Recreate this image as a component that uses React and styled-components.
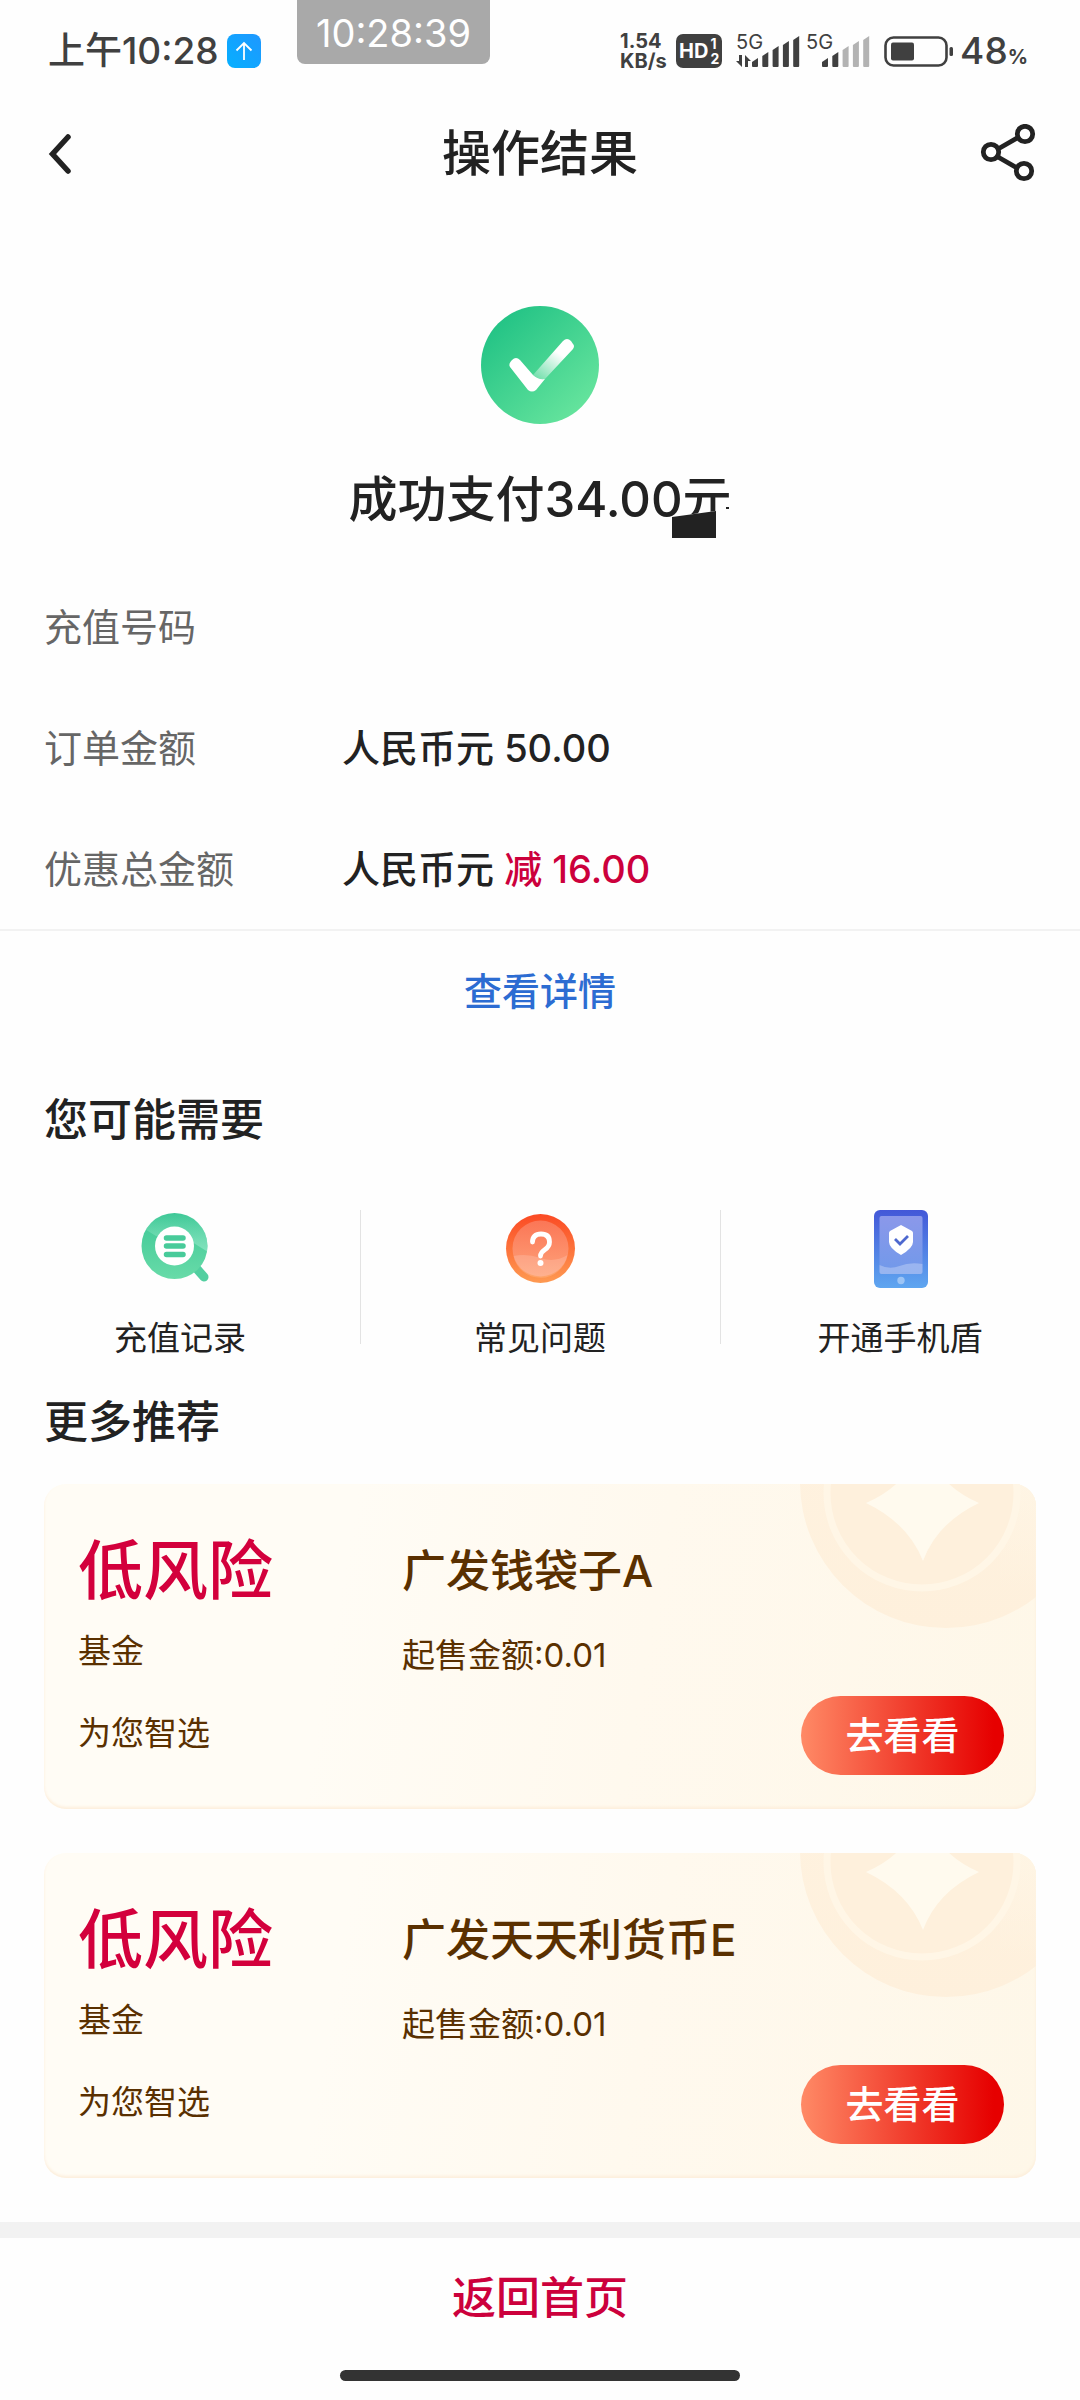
import React from "react";
import styled, { createGlobalStyle } from "styled-components";

const GlobalStyle = createGlobalStyle`
  *, *::before, *::after { box-sizing: border-box; }
  body {
    margin: 0;
    background: #fefefe;
    color: #222;
    font-family: Inter, "Noto Sans CJK SC", sans-serif;
  }
  h1, h2, h3, p, dl, dd { margin: 0; font-weight: inherit; }
  button { border: 0; padding: 0; background: none; color: inherit; font: inherit; cursor: pointer; }
  a { color: inherit; text-decoration: none; }
  svg { display: block; flex: none; }
`;

const Page = styled.div`
  display: flex;
  flex-direction: column;
  min-height: 100vh;
`;

/* ---------- status bar ---------- */

const StatusBar = styled.div`
  position: relative;
  display: flex;
  align-items: center;
  justify-content: space-between;
  height: 102px;
  padding: 0 52px 0 48px;
  color: #404040;
`;

const StatusGroup = styled.div`
  display: flex;
  align-items: center;
  gap: ${(p) => p.$gap}px;
`;

const Clock = styled.span`
  font-size: 37px;
  line-height: 44px;
  font-weight: 500;
`;

const Stopwatch = styled.div`
  position: absolute;
  top: 0;
  left: 297px;
  width: 193px;
  height: 64px;
  border-radius: 0 0 8px 8px;
  background: #a9a9a9;
  color: #fff;
  font-size: 38px;
  line-height: 66px;
  text-align: center;
`;

const Speed = styled.div`
  display: flex;
  flex-direction: column;
  width: 48px;
  font-size: 20px;
  line-height: 20px;
  font-weight: 700;
`;

const HdBadge = styled.div`
  display: flex;
  align-items: center;
  justify-content: center;
  gap: 2px;
  width: 46px;
  height: 34px;
  border-radius: 7px;
  background: #404040;
  color: #fff;
  font-size: 20px;
  line-height: 20px;
  font-weight: 700;
`;

const SimNumbers = styled.span`
  display: flex;
  flex-direction: column;
  font-size: 14px;
  line-height: 15px;
`;

const Signal = styled.div`
  display: flex;
  align-items: flex-start;
  height: 34px;
`;

const SignalLabel = styled.div`
  display: flex;
  flex-direction: column;
  align-items: flex-start;
  gap: 5px;
  width: 16px;
  font-size: 20px;
  line-height: 16px;
  white-space: nowrap;
`;

const Percent = styled.span`
  font-size: 37px;
  line-height: 44px;
  font-weight: 500;
  small { font-size: 20px; line-height: 20px; font-weight: 700; }
`;

/* ---------- navigation ---------- */

const NavBar = styled.header`
  display: grid;
  grid-template-columns: 1fr auto 1fr;
  align-items: center;
  height: 104px;
  padding: 0 44px;
`;

const NavTitle = styled.h1`
  font-size: 49px;
  line-height: 60px;
  font-weight: 500;
`;

const IconButton = styled.button`
  justify-self: ${(p) => p.$side};
`;

/* ---------- result ---------- */

const Result = styled.section`
  display: flex;
  flex-direction: column;
  align-items: center;
  gap: 46px;
  padding: 100px 44px 36px;
`;

const ResultText = styled.p`
  position: relative;
  font-size: 49px;
  line-height: 60px;
  font-weight: 500;
`;

const Smudge = styled.svg`
  position: absolute;
  right: 2px;
  top: 24px;
`;

const Details = styled.dl`
  border-bottom: 2px solid #f2f2f2;
`;

const DetailRow = styled.div`
  display: flex;
  align-items: center;
  height: 121px;
  padding: 0 44px;
  font-size: 38px;
  line-height: 48px;
`;

const DetailName = styled.dt`
  width: 298px;
  color: #666;
`;

const DetailValue = styled.dd`
  font-weight: 500;
`;

const Discount = styled.span`
  color: #cc003c;
`;

const DetailLink = styled.a`
  align-self: center;
  padding: 32px 44px;
  color: #2c6cd2;
  font-size: 38px;
  line-height: 56px;
  font-weight: 500;
`;

/* ---------- shortcuts ---------- */

const Section = styled.section`
  padding-top: ${(p) => p.$space}px;
`;

const SectionTitle = styled.h2`
  padding: 0 44px;
  font-size: 44px;
  line-height: 56px;
  font-weight: 500;
`;

const Shortcuts = styled.nav`
  display: grid;
  grid-template-columns: repeat(3, 1fr);
  padding: 56px 0 34px;
`;

const Shortcut = styled.a`
  display: flex;
  flex-direction: column;
  align-items: center;
  gap: 26px;
  height: 156px;
  padding-top: 2px;
  font-size: 33px;
  line-height: 44px;
  background: linear-gradient(#e3e3e3, #e3e3e3) left 6px / 1px 134px no-repeat;
  &:first-child { background: none; }
`;

/* ---------- recommendations ---------- */

const CardList = styled.div`
  display: flex;
  flex-direction: column;
  gap: 44px;
  padding: 34px 44px 44px;
`;

const Card = styled.article`
  position: relative;
  display: grid;
  grid-template-columns: 324px 1fr auto;
  height: 325px;
  padding: 43px 32px 34px 34px;
  overflow: hidden;
  border-radius: 22px;
  background: linear-gradient(100deg, #fffcf5 30%, #fff9ee 60%, #fef7e8);
  box-shadow: inset 0 -2px 3px #fdeedb;
  color: #5a3000;
`;

const CardColumn = styled.div`
  display: flex;
  flex-direction: column;
`;

const Risk = styled.strong`
  color: #d3003c;
  font-size: 65px;
  line-height: 88px;
  font-weight: 500;
`;

const FundName = styled.h3`
  font-size: 44px;
  line-height: 88px;
  font-weight: 500;
`;

const Note = styled.p`
  padding-top: ${(p) => p.$space}px;
  font-size: 33px;
  line-height: 44px;
`;

const Coin = styled.svg`
  position: absolute;
  top: 0;
  right: 0;
`;

const ViewButton = styled.button`
  position: relative;
  align-self: end;
  width: 203px;
  height: 79px;
  border-radius: 40px;
  background: linear-gradient(90deg, #ff8a66, #f0392a 55%, #e60000 95%);
  color: #fff;
  font-size: 38px;
  line-height: 79px;
  font-weight: 500;
`;

/* ---------- footer ---------- */

const Footer = styled.footer`
  display: flex;
  flex-direction: column;
  align-items: center;
  border-top: 16px solid #f2f2f2;
`;

const HomeButton = styled.button`
  width: 100%;
  height: 120px;
  color: #cc003c;
  font-size: 44px;
  line-height: 56px;
  font-weight: 500;
`;

const HomeIndicator = styled.div`
  width: 400px;
  height: 11px;
  margin: 12px 0 19px;
  border-radius: 6px;
  background: #333;
`;

/* ---------- drawings ---------- */

const UploadIcon = () => (
  <svg width="34" height="34" viewBox="0 0 34 34">
    <defs>
      <linearGradient id="upload" x1="0" y1="1" x2="1" y2="0">
        <stop offset="0" stopColor="#06b0ff" />
        <stop offset="1" stopColor="#1f97ff" />
      </linearGradient>
    </defs>
    <rect width="34" height="34" rx="8" fill="url(#upload)" />
    <path d="M17 26V9M9.500 16.500 17 9l7.500 7.500" fill="none" stroke="#fff" strokeWidth="1.800" />
  </svg>
);

const DataArrows = () => (
  <svg width="16" height="12" viewBox="0 0 16 12">
    <path d="M6 0v12L0 6h3V0zM9 12V0l6 6h-3v6z" fill="#404040" />
  </svg>
);

const tops = [24, 18, 12, 7, 2];

const SignalBars = ({ strength }) => (
  <svg width="48" height="34" viewBox="0 0 48 34">
    {tops.map((top, i) => (
      <path
        key={top}
        d={`M${i * 10.3} ${top + 4}L${i * 10.3 + 6} ${top}V32q0 1-1 1h-4q-1 0-1-1z`}
        fill={i < strength ? "#404040" : "#b3b3b3"}
      />
    ))}
  </svg>
);

const Battery = () => (
  <svg width="70" height="32" viewBox="0 0 70 32">
    <rect x="1.500" y="2.500" width="61" height="28" rx="8" fill="none" stroke="#404040" strokeWidth="2.600" />
    <rect x="7" y="7.500" width="23" height="18" rx="2" fill="#404040" />
    <rect x="65.500" y="12" width="3.500" height="9" rx="1.500" fill="#404040" />
  </svg>
);

const BackIcon = () => (
  <svg width="28" height="44" viewBox="-4 0 28 44">
    <path d="M20 5 4.500 22 20 39" fill="none" stroke="#222" strokeWidth="5.500" strokeLinecap="round" />
  </svg>
);

const ShareIcon = () => (
  <svg width="56" height="60" viewBox="0 0 56 60">
    <g fill="none" stroke="#222" strokeWidth="4.800">
      <path d="M18 25 37 14M18 33 37 44" />
      <circle cx="45" cy="10" r="7.700" />
      <circle cx="11" cy="28" r="7.700" />
      <circle cx="44" cy="47" r="7.700" />
    </g>
  </svg>
);

const SuccessIcon = () => (
  <svg width="118" height="118" viewBox="0 0 118 118">
    <defs>
      <linearGradient id="ok" x1="0.150" y1="0.150" x2="0.850" y2="0.900">
        <stop offset="0" stopColor="#25c486" />
        <stop offset="1" stopColor="#66e49d" />
      </linearGradient>
      <linearGradient id="okArm" gradientUnits="userSpaceOnUse" x1="76" y1="46" x2="58" y2="73">
        <stop offset="0" stopColor="#fff" />
        <stop offset="1" stopColor="#fff" stopOpacity="0.250" />
      </linearGradient>
    </defs>
    <circle cx="59" cy="59" r="59" fill="url(#ok)" />
    <path d="M82 35q4-4 8 0l2 3q2 2 0 5L64 73q-7 1-12-4z" fill="url(#okArm)" />
    <path d="M31 54q4-4 8 0l13 15q5 5 12 4L55 84q-4 3-8 0L29 61q-2-3 2-7z" fill="#fff" />
  </svg>
);

const RecordIcon = () => (
  <svg width="80" height="84" viewBox="0 0 80 84">
    <defs>
      <linearGradient id="rec" x1="0" y1="0" x2="0" y2="1">
        <stop offset="0" stopColor="#3cc796" />
        <stop offset="1" stopColor="#68dba8" />
      </linearGradient>
      <linearGradient id="recShade" x1="0" y1="0" x2="0" y2="1">
        <stop offset="0" stopColor="#8de6c4" stopOpacity="0" />
        <stop offset="1" stopColor="#8de6c4" stopOpacity="0.800" />
      </linearGradient>
      <clipPath id="recClip"><circle cx="34.500" cy="40" r="33" /></clipPath>
    </defs>
    <path d="m57 63 7 8" stroke="#52cfa0" strokeWidth="9" strokeLinecap="round" />
    <circle cx="34.500" cy="40" r="33" fill="url(#rec)" />
    <g clipPath="url(#recClip)">
      <path d="M0 20 16 30 52 36 68 46V6H0z" fill="url(#recShade)" />
    </g>
    <circle cx="34.500" cy="40" r="19.500" fill="#fff" />
    <path d="M26.500 32h16.500M26.500 40h16.500M26.500 48.500h16.500" stroke="#48cb9a" strokeWidth="5.500" strokeLinecap="round" />
  </svg>
);

const QuestionIcon = () => (
  <svg width="80" height="84" viewBox="0 0 80 84">
    <defs>
      <linearGradient id="ask" x1="0" y1="0" x2="0" y2="1">
        <stop offset="0" stopColor="#fb4a24" />
        <stop offset="1" stopColor="#fe9a52" />
      </linearGradient>
      <linearGradient id="askIn" x1="0" y1="0" x2="0" y2="1">
        <stop offset="0" stopColor="#fb7656" />
        <stop offset="1" stopColor="#fea27a" />
      </linearGradient>
    </defs>
    <circle cx="40.500" cy="42.500" r="34.500" fill="url(#ask)" />
    <circle cx="40.500" cy="42.500" r="28" fill="url(#askIn)" />
    <path d="M13.500 50q13-3 27 2t27-3a27.500 27.500 0 0 1-54 1z" fill="#fff" opacity="0.160" />
    <path d="M32.500 36q0-8 8.500-8t8.500 8q0 4.500-4.500 7.500t-4.500 6.500" fill="none" stroke="#fff" strokeWidth="4.800" strokeLinecap="round" />
    <circle cx="40.500" cy="57" r="3" fill="#fff" />
  </svg>
);

const PhoneShieldIcon = () => (
  <svg width="80" height="84" viewBox="0 0 80 84">
    <defs>
      <linearGradient id="phone" x1="0" y1="0" x2="0" y2="1">
        <stop offset="0" stopColor="#4358d8" />
        <stop offset="1" stopColor="#5fa6f0" />
      </linearGradient>
      <linearGradient id="screen" x1="0" y1="0" x2="0" y2="1">
        <stop offset="0" stopColor="#8b98ea" />
        <stop offset="1" stopColor="#7099ea" />
      </linearGradient>
    </defs>
    <rect x="14" y="4" width="54" height="78" rx="6" fill="url(#phone)" />
    <rect x="19.500" y="10" width="43" height="58" rx="2" fill="url(#screen)" />
    <path d="M19.500 59q10 5 20 1t23-2v8q0 2-2 2h-39q-2 0-2-2z" fill="#fff" opacity="0.280" />
    <path d="m41 19 11 6q1 1 1 2v9q0 6-12 13-12-7-12-13v-9q0-1 1-2z" fill="#fff" />
    <path d="m35 33 5 5 8-8" fill="none" stroke="#4d68cf" strokeWidth="2.800" />
    <circle cx="41" cy="74.500" r="3.700" fill="#9cc4f5" />
  </svg>
);

const CoinArt = () => (
  <Coin width="236" height="148" viewBox="0 0 236 148" aria-hidden="true">
    <defs>
      <linearGradient id="coin" x1="0" y1="0" x2="0" y2="1">
        <stop offset="0" stopColor="#fff3e1" />
        <stop offset="1" stopColor="#fef0dc" />
      </linearGradient>
      <linearGradient id="coinEdge" x1="0" y1="0" x2="0" y2="1">
        <stop offset="0" stopColor="#fff7e8" stopOpacity="0.600" />
        <stop offset="1" stopColor="#fff7e8" stopOpacity="0" />
      </linearGradient>
    </defs>
    <circle cx="146" cy="-2" r="146" fill="url(#coin)" />
    <path d="M200 0h36v106h-36z" fill="url(#coinEdge)" />
    <circle cx="122" cy="9" r="95" fill="#fef0dc" stroke="#fff6e6" strokeWidth="7" />
    <path d="M66 19q42-18 57-60 14 42 56 60-42 20-56 58Q108 39 66 19z" fill="#fffaee" />
  </Coin>
);

/* ---------- data ---------- */

const details = [
  { name: "充值号码" },
  { name: "订单金额", value: "人民币元 50.00" },
  { name: "优惠总金额", value: "人民币元 ", discount: "减 16.00" },
];

const shortcuts = [
  { label: "充值记录", Icon: RecordIcon },
  { label: "常见问题", Icon: QuestionIcon },
  { label: "开通手机盾", Icon: PhoneShieldIcon },
];

const funds = ["广发钱袋子A", "广发天天利货币E"];

export default function App() {
  return (
    <Page>
      <GlobalStyle />
      <StatusBar>
        <StatusGroup $gap={8}>
          <Clock>上午10:28</Clock>
          <UploadIcon />
        </StatusGroup>
        <Stopwatch>10:28:39</Stopwatch>
        <StatusGroup $gap={14}>
          <StatusGroup $gap={8}>
            <Speed>
              <span>1.54</span>
              <span>KB/s</span>
            </Speed>
            <HdBadge>
              HD
              <SimNumbers>
                <span>1</span>
                <span>2</span>
              </SimNumbers>
            </HdBadge>
          </StatusGroup>
          <StatusGroup $gap={6}>
            <Signal>
              <SignalLabel>
                5G
                <DataArrows />
              </SignalLabel>
              <SignalBars strength={5} />
            </Signal>
            <Signal>
              <SignalLabel>5G</SignalLabel>
              <SignalBars strength={2} />
            </Signal>
          </StatusGroup>
          <StatusGroup $gap={6}>
            <Battery />
            <Percent>48<small>%</small></Percent>
          </StatusGroup>
        </StatusGroup>
      </StatusBar>

      <NavBar>
        <IconButton $side="start" aria-label="返回"><BackIcon /></IconButton>
        <NavTitle>操作结果</NavTitle>
        <IconButton $side="end" aria-label="分享"><ShareIcon /></IconButton>
      </NavBar>

      <Result>
        <SuccessIcon />
        <ResultText>
          成功支付34.00元
          <Smudge width="62" height="44" viewBox="0 0 62 44" aria-hidden="true">
            <path d="M2 23 48 17V8h14v28H49v8H2z" fill="#fefefe" />
            <path d="M4 23 48 17V44H4z" fill="#222" />
            <path d="M58 13h3v2h-3z" fill="#222" />
          </Smudge>
        </ResultText>
      </Result>

      <Details>
        {details.map((row) => (
          <DetailRow key={row.name}>
            <DetailName>{row.name}</DetailName>
            <DetailValue>
              {row.value}
              {row.discount && <Discount>{row.discount}</Discount>}
            </DetailValue>
          </DetailRow>
        ))}
      </Details>
      <DetailLink href="#detail">查看详情</DetailLink>

      <Section $space={41}>
        <SectionTitle>您可能需要</SectionTitle>
        <Shortcuts>
          {shortcuts.map(({ label, Icon }) => (
            <Shortcut key={label} href="#shortcut">
              <Icon />
              {label}
            </Shortcut>
          ))}
        </Shortcuts>
      </Section>

      <Section $space={0}>
        <SectionTitle>更多推荐</SectionTitle>
        <CardList>
          {funds.map((name) => (
            <Card key={name}>
              <CoinArt />
              <CardColumn>
                <Risk>低风险</Risk>
                <Note $space={14}>基金</Note>
                <Note $space={38}>为您智选</Note>
              </CardColumn>
              <CardColumn>
                <FundName>{name}</FundName>
                <Note $space={18}>起售金额:0.01</Note>
              </CardColumn>
              <ViewButton>去看看</ViewButton>
            </Card>
          ))}
        </CardList>
      </Section>

      <Footer>
        <HomeButton>返回首页</HomeButton>
        <HomeIndicator />
      </Footer>
    </Page>
  );
}
